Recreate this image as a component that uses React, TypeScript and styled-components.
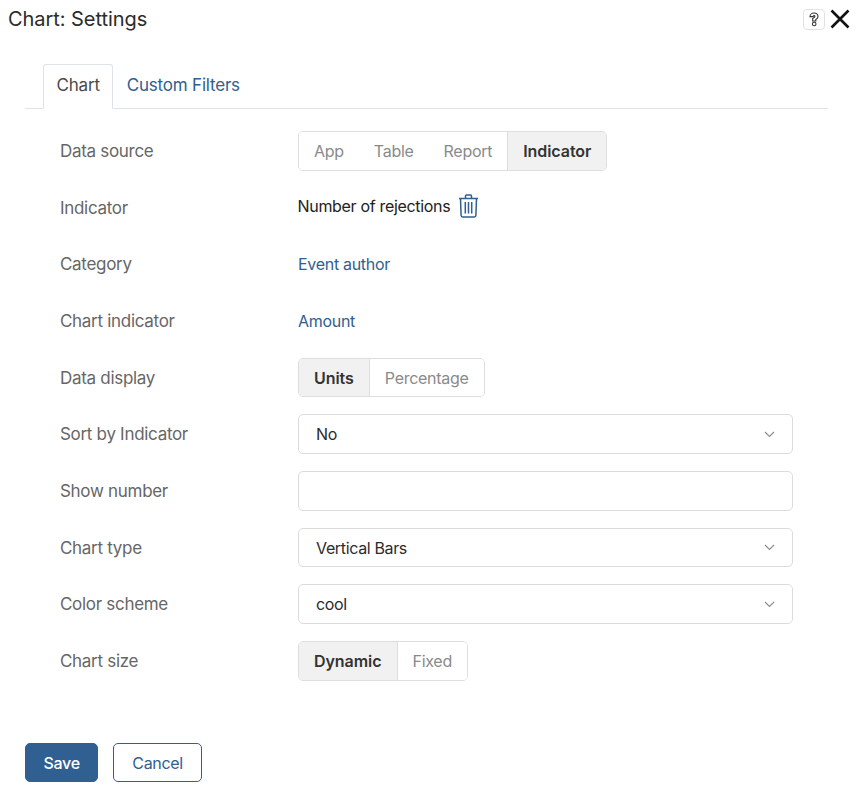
import React from "react";
import styled, { createGlobalStyle } from "styled-components";

const GlobalStyle = createGlobalStyle`
  html, body {
    margin: 0;
    padding: 0;
    background: #fff;
  }
  body {
    font-family: Inter, "Liberation Sans", sans-serif;
    font-size: 16px;
    letter-spacing: -0.3px;
    color: #333;
  }
`;

const Page = styled.div`
  width: 856px;
  height: 788px;
  overflow: hidden;
  box-sizing: border-box;
  padding: 7px 28px 0 8px;
`;

const Header = styled.div`
  display: flex;
  justify-content: space-between;
  align-items: center;
  height: 24px;
`;

const Title = styled.h1`
  margin: 0;
  font-size: 20px;
  line-height: 24px;
  font-weight: 400;
  letter-spacing: -0.05px;
  color: #2b2b2b;
`;

const HeaderIcons = styled.div`
  display: flex;
  align-items: center;
  gap: 5px;
  margin-right: -22px;
`;

const HelpButton = styled.div`
  width: 22px;
  height: 21px;
  box-sizing: border-box;
  border: 1px solid #e2e2e2;
  border-radius: 4px;
  display: flex;
  align-items: center;
  justify-content: center;
`;

const TabBar = styled.div`
  display: flex;
  margin: 33px 0 0 17px;
  padding-left: 18px;
  height: 45px;
  box-sizing: border-box;
  border-bottom: 1px solid #dfe2e8;
`;

const Tab = styled.div<{ $active?: boolean }>`
  height: 45px;
  box-sizing: border-box;
  padding: 0 12.5px 3px;
  display: flex;
  align-items: center;
  font-size: 17px;
  letter-spacing: -0.2px;
  border: 1px solid ${(p) => (p.$active ? "#dfe2e8" : "transparent")};
  border-bottom-color: ${(p) => (p.$active ? "#fff" : "transparent")};
  border-radius: 3px 3px 0 0;
  color: ${(p) => (p.$active ? "#4a4a4a" : "#2f6091")};
`;

const Form = styled.div`
  display: flex;
  flex-direction: column;
  gap: 17px;
  margin: 22px 0 0 52px;
  width: 733px;
`;

const Row = styled.div`
  display: grid;
  grid-template-columns: 238px 495px;
  align-items: center;
  height: 39.67px;
`;

const Label = styled.div`
  padding-top: 0.6px;
  font-size: 17px;
  letter-spacing: -0.3px;
  color: #666;
`;

const Segmented = styled.div`
  display: inline-flex;
  justify-self: start;
  height: 39.67px;
  box-sizing: border-box;
  border: 1px solid #dedede;
  border-radius: 5px;
  overflow: hidden;
`;

const Segment = styled.div<{ $active?: boolean; $divider?: boolean }>`
  display: flex;
  align-items: center;
  padding: 1px 15px 0;
  background: ${(p) => (p.$active ? "#f1f1f1" : "#fff")};
  color: ${(p) => (p.$active ? "#333" : "#8a8a8a")};
  font-weight: ${(p) => (p.$active ? 600 : 400)};
  letter-spacing: ${(p) => (p.$active ? "-0.05px" : "-0.28px")};
  border-left: ${(p) => (p.$divider ? "1px solid #dedede" : "none")};
`;

const Value = styled.div`
  display: flex;
  align-items: center;
  gap: 8px;
  margin-left: -0.5px;
  padding-bottom: 3px;
  letter-spacing: -0.32px;
  color: #222;
`;

const LinkValue = styled.a`
  color: #2f6091;
`;

const Field = styled.div`
  display: flex;
  justify-content: space-between;
  align-items: center;
  height: 39.67px;
  box-sizing: border-box;
  padding: 0.6px 17px 0;
  border: 1px solid #dcdcdc;
  border-radius: 5px;
  letter-spacing: -0.35px;
  color: #2b2b2b;
`;

const Footer = styled.div`
  display: flex;
  gap: 15px;
  margin: 62px 0 0 17px;
`;

const Button = styled.button<{ $primary?: boolean }>`
  height: 39px;
  box-sizing: border-box;
  padding: 1px ${(p) => (p.$primary ? "17.5px" : "18px")} 0;
  font: inherit;
  letter-spacing: inherit;
  border: 1px solid #2f6091;
  border-radius: 5px;
  background: ${(p) => (p.$primary ? "#2f6091" : "#fff")};
  color: ${(p) => (p.$primary ? "#fff" : "#2f6091")};
  font-weight: ${(p) => (p.$primary ? 500 : 400)};
`;

const Chevron = () => (
  <svg width="11" height="7" viewBox="0 0 11 7" fill="none">
    <path d="M1 1l4.5 4.5L10 1" stroke="#8c8c8c" strokeWidth="1.1" />
  </svg>
);

const Trash = () => (
  <svg width="21" height="24" viewBox="0 0 21 24" fill="none" stroke="#2f6091" strokeWidth="1.5">
    <path d="M1 4.5h19M7.5 4.5V2a1 1 0 0 1 1-1h4a1 1 0 0 1 1 1v2.5" />
    <path d="M2.5 4.5l.6 17a1.5 1.5 0 0 0 1.5 1.4h11.8a1.5 1.5 0 0 0 1.5-1.4l.6-17" />
    <path d="M7.3 8v11.5M10.5 8v11.5M13.7 8v11.5" />
  </svg>
);

const Close = () => (
  <svg width="20" height="20" viewBox="0 0 20 20" fill="none">
    <path d="M1.5 1.5l17 17M18.5 1.5l-17 17" stroke="#111" strokeWidth="2.6" />
  </svg>
);

const Help = () => (
  <svg width="10" height="15" viewBox="0 0 10 15" fill="none" stroke="#333" strokeWidth="1.1">
    <path d="M1 4.6C1 2.6 2.9 1 5 1s4 1.6 4 3.5c0 1.6-1 2.4-2.2 3v1.5H3.7V6.4c1.1-.4 2.2-.9 2.2-1.9 0-.5-.4-.9-.9-.9-.6 0-.9.4-.9 1H1z" />
    <circle cx="5.2" cy="12" r="1.8" />
  </svg>
);

const App = () => {
  return (
    <Page>
      <GlobalStyle />
      <Header>
        <Title>Chart: Settings</Title>
        <HeaderIcons>
          <HelpButton>
            <Help />
          </HelpButton>
          <Close />
        </HeaderIcons>
      </Header>

      <TabBar>
        <Tab $active>Chart</Tab>
        <Tab>Custom Filters</Tab>
      </TabBar>

      <Form>
        <Row>
          <Label>Data source</Label>
          <Segmented>
            <Segment>App</Segment>
            <Segment>Table</Segment>
            <Segment>Report</Segment>
            <Segment $active $divider>Indicator</Segment>
          </Segmented>
        </Row>
        <Row>
          <Label>Indicator</Label>
          <Value>
            Number of rejections
            <Trash />
          </Value>
        </Row>
        <Row>
          <Label>Category</Label>
          <LinkValue>Event author</LinkValue>
        </Row>
        <Row>
          <Label>Chart indicator</Label>
          <LinkValue>Amount</LinkValue>
        </Row>
        <Row>
          <Label>Data display</Label>
          <Segmented>
            <Segment $active>Units</Segment>
            <Segment $divider>Percentage</Segment>
          </Segmented>
        </Row>
        <Row>
          <Label>Sort by Indicator</Label>
          <Field>
            No
            <Chevron />
          </Field>
        </Row>
        <Row>
          <Label>Show number</Label>
          <Field />
        </Row>
        <Row>
          <Label>Chart type</Label>
          <Field>
            Vertical Bars
            <Chevron />
          </Field>
        </Row>
        <Row>
          <Label>Color scheme</Label>
          <Field>
            cool
            <Chevron />
          </Field>
        </Row>
        <Row>
          <Label>Chart size</Label>
          <Segmented>
            <Segment $active>Dynamic</Segment>
            <Segment $divider>Fixed</Segment>
          </Segmented>
        </Row>
      </Form>

      <Footer>
        <Button $primary>Save</Button>
        <Button>Cancel</Button>
      </Footer>
    </Page>
  );
};

export default App;
